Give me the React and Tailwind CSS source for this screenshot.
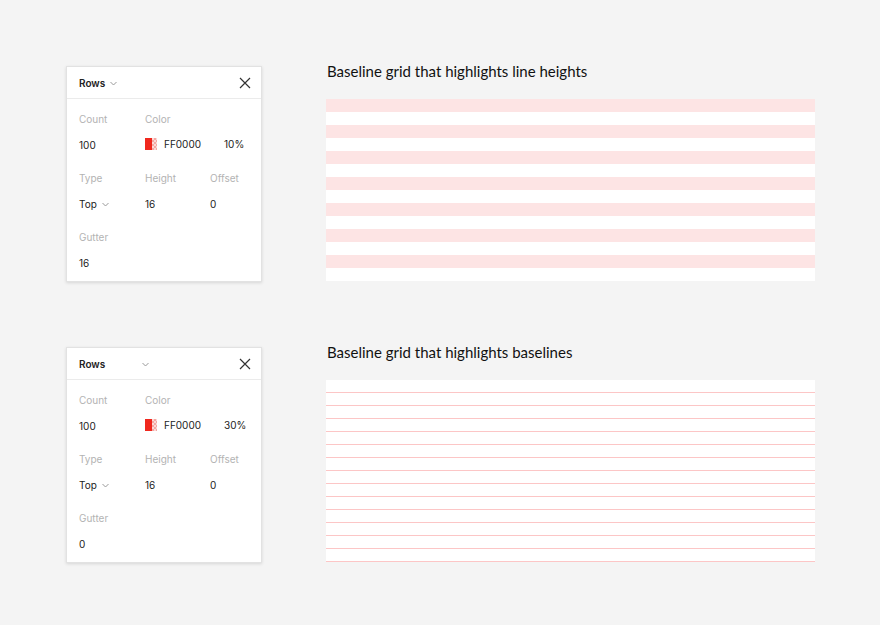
import React from "react";

const ChevronDown = () => (
  <svg width="7" height="5" viewBox="0 0 7 5" fill="none" className="inline-block">
    <path d="M0.5 1 L3.5 4 L6.5 1" stroke="#9a9a9a" strokeWidth="1" />
  </svg>
);

const CloseIcon = () => (
  <svg width="12" height="12" viewBox="0 0 12 12" fill="none">
    <path d="M1 1 L11 11 M11 1 L1 11" stroke="#333" strokeWidth="1.2" />
  </svg>
);

const Swatch = () => (
  <div className="flex h-[12px] w-[12px]">
    <div className="h-full w-[7px] bg-[#f0281e]" />
    <div
      className="h-full w-[5px] bg-[#fbd9d7]"
      style={{
        backgroundImage:
          "linear-gradient(45deg,#f4a9a4 25%,transparent 25%,transparent 75%,#f4a9a4 75%),linear-gradient(45deg,#f4a9a4 25%,transparent 25%,transparent 75%,#f4a9a4 75%)",
        backgroundSize: "4px 4px",
        backgroundPosition: "0 0,2px 2px",
      }}
    />
  </div>
);

function Field({ label, children }) {
  return (
    <div className="flex flex-col">
      <div className="h-[26px] text-[#b3b3b3]">{label}</div>
      <div className="h-[33px] text-[#222]">{children}</div>
    </div>
  );
}

function Panel({ pct, gutter, wideHeader }) {
  return (
    <div className="w-[196px] h-[216px] bg-white border border-[#e2e2e2] shadow-[0_1px_3px_rgba(0,0,0,0.12)] text-[10px] leading-[14px] font-['Inter',sans-serif]">
      <div className="h-[32px] border-b border-[#ebebeb] flex items-center pl-[12px] pr-[10px]">
        <span className="font-semibold text-[#222]">Rows</span>
        <span className={wideHeader ? "ml-[37px] mt-[-1px]" : "ml-[5px] mt-[-1px]"}>
          <ChevronDown />
        </span>
        <span className="ml-auto">
          <CloseIcon />
        </span>
      </div>
      <div className="pl-[12px] pt-[13px] grid grid-cols-[66px_65px_1fr]">
        <Field label="Count">100</Field>
        <Field label="Color">
          <div className="flex items-center gap-[7px] mt-[-1px]">
            <Swatch />
            <span>FF0000</span>
            <span className="ml-[16px]">{pct}</span>
          </div>
        </Field>
        <div />
        <Field label="Type">
          <span>Top</span>
          <span className="ml-[5px] relative top-[-1px]">
            <ChevronDown />
          </span>
        </Field>
        <Field label="Height">16</Field>
        <Field label="Offset">0</Field>
        <Field label="Gutter">{gutter}</Field>
      </div>
    </div>
  );
}

const rows = Array.from({ length: 14 });

function StripeGrid() {
  return (
    <div className="w-[489px] flex flex-col">
      {rows.map((_, i) => (
        <div key={i} className={i % 2 === 0 ? "h-[13px] bg-[#fde4e4]" : "h-[13px] bg-white"} />
      ))}
    </div>
  );
}

function LineGrid() {
  return (
    <div className="w-[489px] flex flex-col bg-white">
      {rows.map((_, i) => (
        <div key={i} className="flex flex-col">
          <div className="h-[12px]" />
          <div className="h-[1px] bg-[#fcc6c6]" />
        </div>
      ))}
    </div>
  );
}

function Section({ title, pct, gutter, wideHeader, grid }) {
  return (
    <div className="flex">
      <Panel pct={pct} gutter={gutter} wideHeader={wideHeader} />
      <div className="ml-[64px] flex flex-col">
        <div className="h-[33px] mt-[-5px] pl-[1px] text-[15px] leading-[20px] text-[#111] font-['Lato',sans-serif]">
          {title}
        </div>
        <div className="mt-[5px]">{grid}</div>
      </div>
    </div>
  );
}

export default function App() {
  return (
    <div className="w-[880px] h-[625px] bg-[#f4f4f4] pl-[66px] pt-[66px] flex flex-col gap-[65px]">
      <Section
        title="Baseline grid that highlights line heights"
        pct="10%"
        gutter="16"
        grid={<StripeGrid />}
      />
      <Section
        title="Baseline grid that highlights baselines"
        pct="30%"
        gutter="0"
        wideHeader
        grid={<LineGrid />}
      />
    </div>
  );
}
